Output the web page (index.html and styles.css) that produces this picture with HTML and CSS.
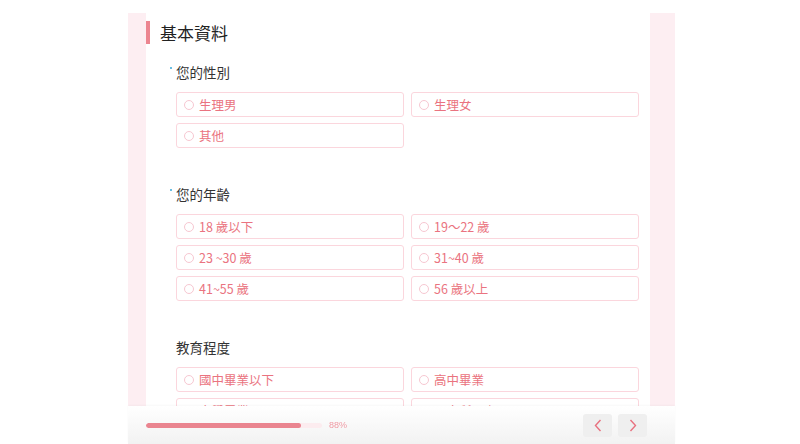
FILE: index.html
```html
<!DOCTYPE html>
<html lang="zh-Hant">
<head>
    <meta charset="UTF-8">
    <meta name="viewport" content="width=device-width, initial-scale=1.0">
    <title>問卷 - 基本資料</title>
    <link rel="stylesheet" href="styles.css">
</head>
<body>
    <div class="survey">
        <div class="survey-body">
            <h2 class="section-title">基本資料</h2>

            <div class="question">
                <div class="question-label required">您的性別</div>
                <div class="options">
                    <label class="option"><span class="radio"></span>生理男</label>
                    <label class="option"><span class="radio"></span>生理女</label>
                    <label class="option"><span class="radio"></span>其他</label>
                </div>
            </div>

            <div class="question">
                <div class="question-label required">您的年齡</div>
                <div class="options">
                    <label class="option"><span class="radio"></span>18 歲以下</label>
                    <label class="option"><span class="radio"></span>19～22 歲</label>
                    <label class="option"><span class="radio"></span>23 ~30 歲</label>
                    <label class="option"><span class="radio"></span>31~40 歲</label>
                    <label class="option"><span class="radio"></span>41~55 歲</label>
                    <label class="option"><span class="radio"></span>56 歲以上</label>
                </div>
            </div>

            <div class="question">
                <div class="question-label">教育程度</div>
                <div class="options">
                    <label class="option"><span class="radio"></span>國中畢業以下</label>
                    <label class="option"><span class="radio"></span>高中畢業</label>
                    <label class="option"><span class="radio"></span>大學畢業</label>
                    <label class="option"><span class="radio"></span>研究所以上</label>
                </div>
            </div>
        </div>
    </div>

    <div class="footer">
        <div class="progress">
            <div class="progress-track">
                <div class="progress-fill" style="width: 88%"></div>
            </div>
            <span class="progress-text">88%</span>
        </div>
        <div class="nav-buttons">
            <button class="nav-btn" aria-label="上一頁">
                <svg width="8" height="13" viewBox="0 0 8 13"><path d="M6.5 1 L1.5 6.5 L6.5 12" fill="none" stroke="#e8717f" stroke-width="1.4"/></svg>
            </button>
            <button class="nav-btn" aria-label="下一頁">
                <svg width="8" height="13" viewBox="0 0 8 13"><path d="M1.5 1 L6.5 6.5 L1.5 12" fill="none" stroke="#e8717f" stroke-width="1.4"/></svg>
            </button>
        </div>
    </div>
</body>
</html>
```

FILE: styles.css
```css
* {
    margin: 0;
    padding: 0;
    box-sizing: border-box;
}

body {
    font-family: "Noto Sans CJK TC", "Noto Sans", sans-serif;
    background: #fff;
    color: #333;
    padding-left: 3px;
    height: 444px;
    overflow: hidden;
}

.survey {
    width: 547px;
    margin: 13px auto 0;
    background: #fdeef2;
    padding: 0 25px 0 18px;
}

.survey-body {
    background: #fff;
    padding: 8px 11px 60px 0;
}

.section-title {
    font-size: 17px;
    font-weight: normal;
    color: #222;
    line-height: 23px;
    border-left: 4px solid #ec8590;
    padding-left: 10px;
    margin-bottom: 18px;
}

.question {
    padding-left: 30px;
    margin-bottom: 36px;
}

.question-label {
    font-size: 13.5px;
    line-height: 20px;
    color: #333;
    margin-bottom: 10px;
    position: relative;
}

.question-label.required::before {
    content: '';
    position: absolute;
    left: -6px;
    top: 5px;
    width: 2px;
    height: 2px;
    border-radius: 50%;
    background: #3aa8d8;
}

.options {
    display: grid;
    grid-template-columns: 1fr 1fr;
    gap: 6px 7px;
}

.option {
    display: flex;
    align-items: center;
    gap: 5px;
    height: 25px;
    padding-left: 7px;
    border: 1px solid #fbd6dd;
    border-radius: 3px;
    font-size: 12.5px;
    color: #ea7380;
    cursor: pointer;
}

.radio {
    width: 10px;
    height: 10px;
    border: 1px solid #f7c7d1;
    border-radius: 50%;
    flex-shrink: 0;
}

.footer {
    position: fixed;
    bottom: 0;
    left: 128px;
    width: 547px;
    height: 38px;
    background: linear-gradient(180deg, #ffffff 0%, #f2f2f2 100%);
    box-shadow: 0 -1px 2px rgba(0, 0, 0, 0.03);
    display: flex;
    align-items: center;
    justify-content: space-between;
    padding: 0 28px 0 18px;
}

.progress {
    display: flex;
    align-items: center;
    gap: 7px;
}

.progress-track {
    width: 176px;
    height: 5px;
    background: #fcecef;
    border-radius: 3px;
    overflow: hidden;
}

.progress-fill {
    height: 100%;
    background: #ea8590;
    border-radius: 3px;
}

.progress-text {
    font-family: "Liberation Sans", Arial, sans-serif;
    font-size: 9px;
    color: #f09aa4;
}

.nav-buttons {
    display: flex;
    gap: 6px;
}

.nav-btn {
    width: 29px;
    height: 23px;
    border: none;
    border-radius: 3px;
    background: #efefef;
    display: flex;
    align-items: center;
    justify-content: center;
    cursor: pointer;
}
```
